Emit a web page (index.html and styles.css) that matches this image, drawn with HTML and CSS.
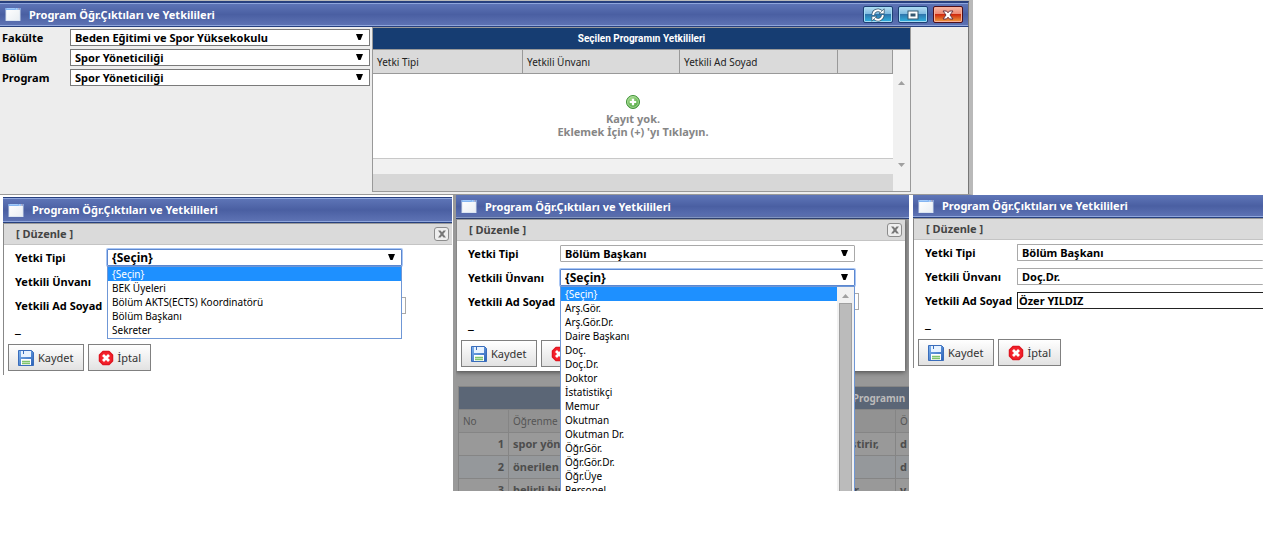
FILE: index.html
```html
<!DOCTYPE html>
<html lang="tr">
<head>
<meta charset="utf-8">
<title>Program Öğr.Çıktıları ve Yetkilileri</title>
<link rel="stylesheet" href="styles.css">
</head>
<body>
<svg class="sprite" aria-hidden="true">
  <defs>
    <linearGradient id="g-disk" x1="0" y1="0" x2="1" y2="1"><stop offset="0" stop-color="#7fb4ee"/><stop offset="1" stop-color="#2c62b8"/></linearGradient>
    <linearGradient id="g-win" x1="0" y1="0" x2="1" y2="1"><stop offset="0" stop-color="#fff"/><stop offset="1" stop-color="#e9eef3"/></linearGradient>
    <radialGradient id="g-add" cx=".4" cy=".3" r=".8"><stop offset="0" stop-color="#a5dc8c"/><stop offset="1" stop-color="#3f9c35"/></radialGradient>
    <symbol id="i-window" viewBox="0 0 16 14">
      <rect x=".5" y=".5" width="15" height="13" fill="url(#g-win)" stroke="#dfe9f5"/>
      <rect x="0" y="0" width="16" height="2" fill="#72aaf0"/>
      <path d="M1 .5h9" stroke="#a9cdf8"/><path d="M11 1h1M13 1h1" stroke="#fff"/><path d="M14 1h1" stroke="#e26a50"/>
    </symbol>
    <symbol id="i-save" viewBox="0 0 16 16">
      <path d="M.5 .5h13l2 2v13H.5z" fill="url(#g-disk)" stroke="#3a6dbb"/>
      <path d="M3 1h10v6H3z" fill="#e8f3ff"/><path d="M5.500 1v3" stroke="#3a6dbb"/>
      <path d="M3 9h10v6H3z" fill="#fff"/><path d="M4 11.500h8M4 13.500h8" stroke="#7fc46a" stroke-width="1.500"/>
    </symbol>
    <symbol id="i-cancel" viewBox="0 0 16 16">
      <path d="M5 1.500h6l3.500 3.500v6L11 14.500H5L1.500 11V5z" fill="#f5222c" stroke="#e01520" stroke-width="1.500" stroke-linejoin="round"/>
      <path d="M5 5l6 6M11 5l-6 6" stroke="#fff" stroke-width="2.800"/>
    </symbol>
    <symbol id="i-x" viewBox="0 0 8 8"><path d="M0 .5h2.500L4 2.300 5.500 .5H8L5.300 4 8 7.500H5.500L4 5.700 2.500 7.500H0L2.700 4z" fill="#777"/></symbol>
    <symbol id="i-add" viewBox="0 0 14 14">
      <circle cx="7" cy="7" r="6.500" fill="url(#g-add)" stroke="#3f9238"/>
      <circle cx="7" cy="7" r="5.400" fill="none" stroke="#c4eab2" stroke-width=".7"/>
      <path d="M7 3.800v6.400M3.800 7h6.400" stroke="#fff" stroke-width="2.200"/>
    </symbol>
  </defs>
</svg>

<main class="page">
  <section class="window">
    <header class="titlebar">
      <svg class="win-icon"><use href="#i-window"/></svg>
      <h1>Program Öğr.Çıktıları ve Yetkilileri</h1>
      <div class="controls">
        <button type="button" class="ctl" aria-label="Yenile"><svg viewBox="0 0 14 14"><g fill="none" stroke="#35576f" stroke-width="3.400"><path d="M2.200 7a4.800 4.800 0 0 1 8-3.500M11.800 7a4.800 4.800 0 0 1-8 3.500"/></g><path d="M8 5.800h5.200V.8zM6 8.200H.8v5z" fill="#fff" stroke="#35576f" stroke-width=".8"/><g fill="none" stroke="#fff" stroke-width="1.800"><path d="M2.200 7a4.800 4.800 0 0 1 8-3.500M11.800 7a4.800 4.800 0 0 1-8 3.500"/></g></svg></button>
        <button type="button" class="ctl" aria-label="Büyüt"><svg viewBox="0 0 14 14"><path d="M3.500 4.500h7v5h-7z" fill="none" stroke="#35576f" stroke-width="4"/><path d="M3.500 4.500h7v5h-7z" fill="#35576f" stroke="#fff" stroke-width="2"/></svg></button>
        <button type="button" class="ctl ctl-close" aria-label="Kapat"><svg viewBox="0 0 14 14"><path d="M2 3h3.500L7 4.800 8.500 3H12L9 7l3 4H8.500L7 9.200 5.500 11H2l3-4z" fill="#fff" stroke="#6b3440" stroke-width="1"/></svg></button>
      </div>
    </header>
    <div class="workspace">
      <form class="filters">
        <label for="fakulte">Fakülte</label>
        <span class="pick"><select id="fakulte"><option>Beden Eğitimi ve Spor Yüksekokulu</option></select></span>
        <label for="bolum">Bölüm</label>
        <span class="pick"><select id="bolum"><option>Spor Yöneticiliği</option></select></span>
        <label for="program">Program</label>
        <span class="pick"><select id="program"><option>Spor Yöneticiliği</option></select></span>
      </form>
      <section class="grid">
        <h2>Seçilen Programın Yetkilileri</h2>
        <div class="grid-body">
          <table>
            <colgroup><col class="c-type"><col class="c-title"><col class="c-name"><col class="c-act"></colgroup>
            <thead><tr><th>Yetki Tipi</th><th>Yetkili Ünvanı</th><th>Yetkili Ad Soyad</th><th></th></tr></thead>
            <tbody><tr><td colspan="4">
              <button type="button" class="add" aria-label="Ekle"><svg><use href="#i-add"/></svg></button>
              <p>Kayıt yok.</p><p>Eklemek İçin (+) 'yı Tıklayın.</p>
            </td></tr></tbody>
            <tfoot><tr class="strip"><td colspan="4"></td></tr><tr class="foot"><td colspan="4"></td></tr></tfoot>
          </table>
          <div class="scroll"><i class="up"></i><i class="down"></i></div>
        </div>
      </section>
    </div>
  </section>

  <div class="steps">
    <section class="step step-one">
      <header class="titlebar">
        <svg class="win-icon"><use href="#i-window"/></svg>
        <h2>Program Öğr.Çıktıları ve Yetkilileri</h2>
      </header>
      <div class="dialog">
        <div class="ribbon"><h3>[ Düzenle ]</h3><button type="button" class="close" aria-label="Kapat"><svg><use href="#i-x"/></svg></button></div>
        <form>
          <div class="fields">
            <label for="tip1">Yetki Tipi</label>
            <span class="pick open"><select id="tip1"><option>{Seçin}</option></select>
              <ul class="menu" role="listbox"><li class="on" role="option">{Seçin}</li><li role="option">BEK Üyeleri</li><li role="option">Bölüm AKTS(ECTS) Koordinatörü</li><li role="option">Bölüm Başkanı</li><li role="option">Sekreter</li></ul>
            </span>
            <label for="unvan1">Yetkili Ünvanı</label>
            <span class="pick"><select id="unvan1"></select></span>
            <label for="ad1">Yetkili Ad Soyad</label>
            <input id="ad1" type="text">
          </div>
          <p class="dash">_</p>
          <div class="actions"><button type="button" class="btn"><svg><use href="#i-save"/></svg>Kaydet</button><button type="button" class="btn"><svg><use href="#i-cancel"/></svg>İptal</button></div>
        </form>
      </div>
    </section>

    <section class="step step-two">
      <header class="titlebar">
        <svg class="win-icon"><use href="#i-window"/></svg>
        <h2>Program Öğr.Çıktıları ve Yetkilileri</h2>
      </header>
      <div class="shade">
        <div class="dialog">
          <div class="ribbon"><h3>[ Düzenle ]</h3><button type="button" class="close" aria-label="Kapat"><svg><use href="#i-x"/></svg></button></div>
          <form>
            <div class="fields">
              <label for="tip2">Yetki Tipi</label>
              <span class="pick"><select id="tip2"><option>Bölüm Başkanı</option></select></span>
              <label for="unvan2">Yetkili Ünvanı</label>
              <span class="pick open"><select id="unvan2"><option>{Seçin}</option></select>
                <span class="menu menu-long">
                  <ul role="listbox"><li class="on" role="option">{Seçin}</li><li role="option">Arş.Gör.</li><li role="option">Arş.Gör.Dr.</li><li role="option">Daire Başkanı</li><li role="option">Doç.</li><li role="option">Doç.Dr.</li><li role="option">Doktor</li><li role="option">İstatistikçi</li><li role="option">Memur</li><li role="option">Okutman</li><li role="option">Okutman Dr.</li><li role="option">Öğr.Gör.</li><li role="option">Öğr.Gör.Dr.</li><li role="option">Öğr.Üye</li><li role="option">Personel</li></ul>
                  <span class="track"><i class="up"></i><i class="thumb"></i></span>
                </span>
              </span>
              <label for="ad2">Yetkili Ad Soyad</label>
              <input id="ad2" type="text">
            </div>
            <p class="dash">_</p>
            <div class="actions"><button type="button" class="btn"><svg><use href="#i-save"/></svg>Kaydet</button><button type="button" class="btn" aria-label="İptal"><svg><use href="#i-cancel"/></svg></button></div>
          </form>
        </div>
        <table class="outcomes">
          <colgroup><col class="o-no"><col><col class="o-last"></colgroup>
          <thead>
            <tr><th colspan="3" class="caption">Seçilen Programın</th></tr>
            <tr><th>No</th><th>Öğrenme</th><th>Ö</th></tr>
          </thead>
          <tbody>
            <tr><td>1</td><td><div class="pair"><span>spor yön</span><span>ştirir,</span></div></td><td>d</td></tr>
            <tr><td>2</td><td>önerilen</td><td>d</td></tr>
            <tr><td>3</td><td><div class="pair"><span>belirli bir</span><span class="short">ur</span></div></td><td>y</td></tr>
          </tbody>
        </table>
      </div>
    </section>

    <section class="step step-three">
      <header class="titlebar">
        <svg class="win-icon"><use href="#i-window"/></svg>
        <h2>Program Öğr.Çıktıları ve Yetkilileri</h2>
      </header>
      <div class="dialog">
        <div class="ribbon"><h3>[ Düzenle ]</h3></div>
        <form>
          <div class="fields">
            <label for="tip3">Yetki Tipi</label>
            <span class="pick"><select id="tip3"><option>Bölüm Başkanı</option></select></span>
            <label for="unvan3">Yetkili Ünvanı</label>
            <span class="pick"><select id="unvan3"><option>Doç.Dr.</option></select></span>
            <label for="ad3">Yetkili Ad Soyad</label>
            <input id="ad3" type="text" value="Özer YILDIZ">
          </div>
          <p class="dash">_</p>
          <div class="actions"><button type="button" class="btn"><svg><use href="#i-save"/></svg>Kaydet</button><button type="button" class="btn"><svg><use href="#i-cancel"/></svg>İptal</button></div>
        </form>
      </div>
    </section>
  </div>
</main>
</body>
</html>
```
FILE: styles.css
```css
* { box-sizing: border-box; }
body { margin: 0; background: #fff; color: #000; font: bold 11px/14px "Noto Sans", "Open Sans", sans-serif; overflow-x: hidden; }
h1, h2, h3, p, ul { margin: 0; padding: 0; font-size: inherit; font-weight: inherit; }
ul { list-style: none; }
button, input, select { font: inherit; color: inherit; margin: 0; }
svg { display: block; }
.sprite { position: absolute; width: 0; height: 0; }

/* Title bars */
.titlebar { display: flex; align-items: center; height: 24px; padding: 0 5px; color: #fff; background: linear-gradient(#5f76b8, #4a5fa2 50%, #5f74b5); border-bottom: 1px solid #27407f; box-shadow: inset 0 -1px #8fa6dc; }
.titlebar h1, .titlebar h2 { flex: 1; white-space: nowrap; }
.win-icon { flex: none; width: 16px; height: 13px; margin-right: 8px; }
.controls { display: flex; gap: 5px; }
.ctl { width: 30px; height: 17px; padding: 0; display: grid; place-items: center; border: 1px solid #1d3f73; border-radius: 2px; background: linear-gradient(#b5dcf2, #7fbbe0 45%, #2f77ad 50%, #2fb4e2); box-shadow: inset 0 0 0 1px #a5dcf3; }
.ctl svg { width: 14px; height: 14px; }
.ctl-close { border-color: #4f0f1a; background: linear-gradient(#f7b8a8, #ee8a74 45%, #cf2a0e 50%, #f0a040); box-shadow: inset 0 0 0 1px #f8b19a; }

/* Main window */
.window { width: 77%; height: 195px; display: flex; flex-direction: column; background: #ededed; border-top: 1px solid #b9b9b9; border-right: 4px solid #b9b9b9; border-bottom: 1px solid #999; }
.window > .titlebar { height: 26px; border-top: 2px solid #27407f; border-right: 1px solid #777; box-shadow: inset 0 1px #8fa6dc, inset 0 -1px #8fa6dc; }
.workspace { flex: 1; display: grid; grid-template-columns: 370px 539px; gap: 2px; border-right: 1px solid #777; }
.filters { display: grid; grid-template-columns: 65px 1fr; grid-auto-rows: 17px; gap: 3px; align-content: start; align-items: center; padding: 2px 0 0 2px; }

/* Fields */
.pick { position: relative; display: block; height: 17px; }
.pick::after { content: ""; position: absolute; right: 7px; top: 5px; width: 7px; height: 6px; background: #000; clip-path: polygon(0 0, 100% 0, 65% 100%, 35% 100%); pointer-events: none; }
select { appearance: none; display: block; width: 100%; height: 17px; padding: 0 20px 0 4px; line-height: 15px; background: #fff; border: 1px solid #7a7a7a; border-radius: 0; }
.dialog select { border-color: #a9a9a9; border-radius: 1px; }
.dialog .open select { font-size: 12px; border-color: #5c87cf; box-shadow: 0 0 0 1px #a8c6f5; outline: 0; }
input { display: block; width: 100%; height: 17px; padding: 0 1px; line-height: 15px; background: #fff; border: 1px solid #a9a9a9; }

/* Authorised people grid */
.grid { display: flex; flex-direction: column; margin-bottom: 2px; border: 1px solid #999; }
.grid h2 { height: 22px; line-height: 21px; text-align: center; font-family: Roboto, sans-serif; font-size: 10px; color: #fff; background: #163d72; border-bottom: 1px solid #999; }
.grid-body { flex: 1; display: grid; grid-template-columns: 1fr 17px; }
.grid table { width: 100%; height: 100%; table-layout: fixed; border-collapse: separate; border-spacing: 0; }
.grid th { height: 24px; padding: 0 4px; text-align: left; font-size: 10px; font-weight: normal; color: #222; background: #dadada; border-right: 1px solid #999; border-bottom: 1px solid #999; }
.grid td { padding: 0; }
.grid tbody td { padding-top: 21px; vertical-align: top; text-align: center; color: #868686; background: #fff; border-bottom: 1px solid #c8c8c8; line-height: 13px; }
.c-type { width: 150px; } .c-title { width: 157px; } .c-name { width: 158px; }
.add { display: inline-block; padding: 0; border: 0; background: none; vertical-align: top; }
.add svg { width: 14px; height: 14px; margin-bottom: 3px; }
.strip td { height: 15px; background: #f1f1f1; }
.foot td { height: 17px; background: #d7d7d7; }
.scroll { display: flex; flex-direction: column; justify-content: space-between; align-items: center; padding: 31px 0 24px; background: #f1f1f1; }
.up, .down { display: block; width: 7px; height: 4px; background: #a0a0a0; clip-path: polygon(50% 0, 100% 100%, 0 100%); }
.down { clip-path: polygon(0 0, 100% 0, 50% 100%); }

/* Three steps of the edit dialog */
.steps { display: grid; grid-template-columns: 450fr 457fr 353fr; align-items: start; padding-left: 3px; }
.step { min-width: 0; }
.step-one { margin-right: 1px; padding-top: 2px; }
.step-one .titlebar { height: 26px; border-top: 1px solid #27407f; box-shadow: inset 0 1px #8fa6dc, inset 0 -1px #8fa6dc; }
.step-one .dialog { height: 152px; }
.step-two { height: 296px; margin-right: 1px; overflow: hidden; border-left: 3px solid #999; }
.step-three { margin-left: 3px; }
.step-three .titlebar { height: 23px; }
.step-three .dialog { height: 150px; }
.dialog { background: #fff; border-left: 1px solid #888; border-top: 1px solid #999; }
.ribbon { display: flex; align-items: center; justify-content: space-between; height: 21px; padding: 0 3px 0 12px; color: #444; background: #dadada; border-bottom: 1px solid #c4c4c4; }
.close { width: 15px; height: 14px; padding: 0; display: grid; place-items: center; background: #eee; border: 1px solid #8c8c8c; border-radius: 3px; }
.close svg { width: 8px; height: 8px; }
.fields { display: grid; grid-template-columns: 89px 295px; grid-auto-rows: 17px; gap: 7px 3px; align-items: center; padding: 4px 0 0 11px; white-space: nowrap; }
.fields input { width: 299px; }
.step-three .fields { grid-template-columns: 89px 1fr; }
.step-three .pick::after { display: none; }
.step-three .fields input { width: 100%; border-color: #222; border-right: 0; }
.step-three select { border-right: 0; }
.dash { padding: 7px 0 0 11px; height: 30px; font-size: 14px; }
.actions { display: flex; gap: 4px; padding-left: 4px; }
.btn { display: flex; align-items: center; gap: 4px; height: 27px; padding: 0 9px; font-weight: normal; color: #333; background: linear-gradient(#fff, #e2e2e2); border: 1px solid #808080; }
.btn svg { width: 16px; height: 16px; }

/* Opened lists */
.menu { position: absolute; z-index: 2; left: 0; right: 0; top: 17px; padding-bottom: 1px; font-size: 10px; font-weight: normal; background: #fff; border: 1px solid #6f97d6; }
.menu li { padding-left: 4px; line-height: 14px; }
.menu .on { color: #fff; background: #1e90ff; }
.menu-long { display: grid; grid-template-columns: 1fr 17px; }
.track { display: flex; flex-direction: column; align-items: center; gap: 5px; padding-top: 7px; background: #f1f1f1; }
.thumb { flex: 1; width: 13px; background: #bbb; border: 1px solid #a0a0a0; }

/* Dimmed page behind the second dialog */
.shade { height: 272px; padding-right: 4px; background: #989898; }
.shade .dialog { height: 152px; box-shadow: 0 1px 5px #444; }
.outcomes { width: 102%; margin: 15px 0 0 2px; table-layout: fixed; border-collapse: collapse; color: #4d4d4d; }
.outcomes th, .outcomes td { height: 23px; padding: 0 4px; border: 1px solid #858585; text-align: left; white-space: nowrap; overflow: hidden; background: #999; }
.outcomes th { font-size: 10px; font-weight: normal; color: #555; background: #929292; }
.outcomes .caption { padding-left: 356px; font-weight: bold; color: #bbb; background: #5b6676; }
.outcomes td:first-child { text-align: right; }
.outcomes tr:nth-child(even) td { background: #95989b; }
.o-no { width: 50px; } .o-last { width: 20px; }
.pair { display: flex; justify-content: space-between; padding-right: 12px; }
.short { padding-right: 20px; }
```
